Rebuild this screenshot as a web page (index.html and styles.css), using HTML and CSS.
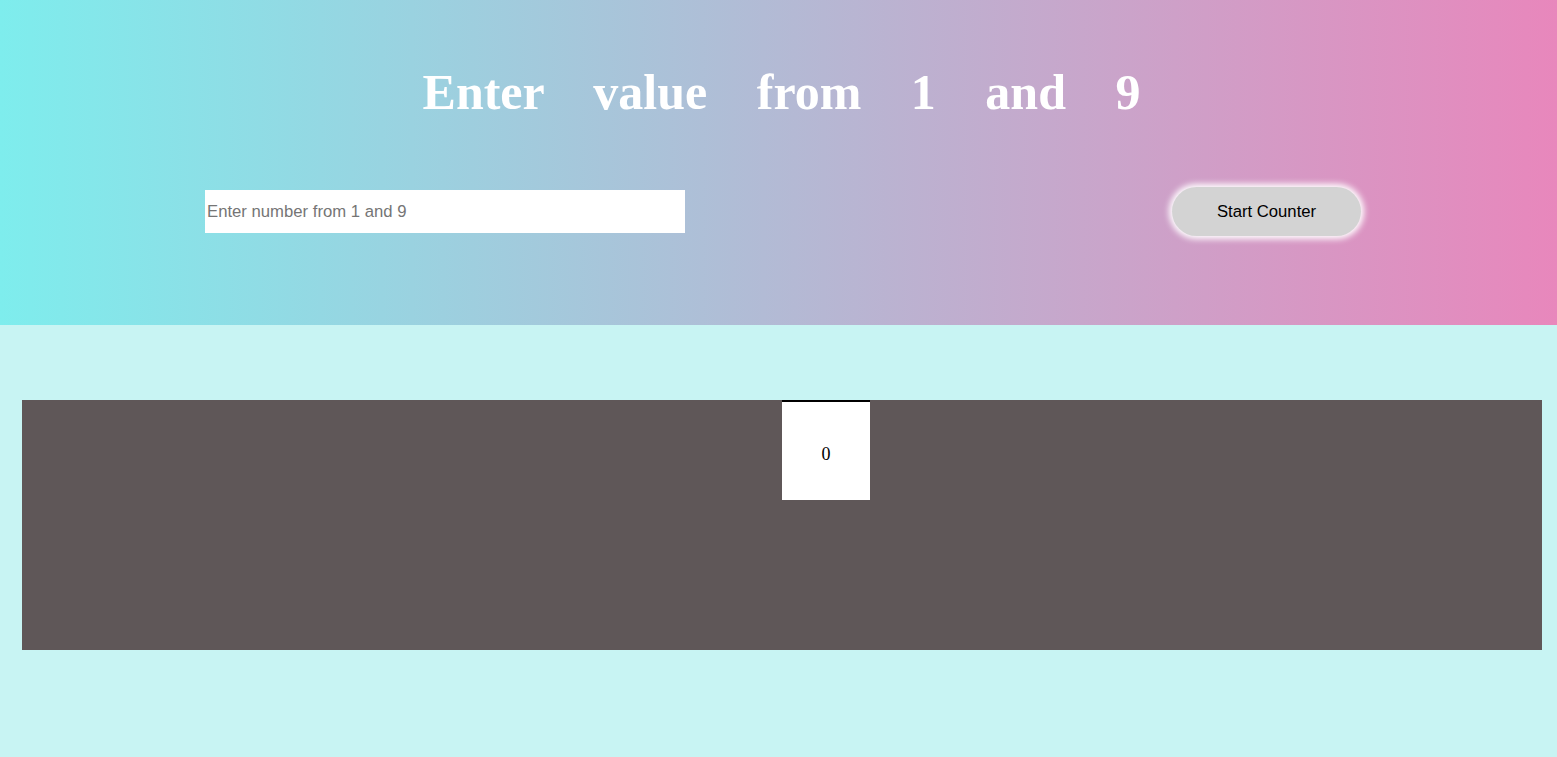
FILE: index.html
```html
<!DOCTYPE html>
<html>
<head>
<meta charset="utf-8">
<link rel="stylesheet" href="styles.css">
</head>
<body>
<header class="hero">
  <h1 class="title">Enter value from 1 and 9</h1>
  <div class="controls">
    <input class="num-input" type="text" placeholder="Enter number from 1 and 9">
    <button class="start-btn">Start Counter</button>
  </div>
</header>
<main class="main">
  <section class="stage">
    <div class="counter">0</div>
  </section>
</main>
</body>
</html>
```

FILE: styles.css
```css
html, body {
  margin: 0;
  padding: 0;
}
body {
  background: #c8f4f3;
  font-family: "Liberation Serif", "Times New Roman", serif;
  height: 757px;
  overflow: hidden;
}
.hero {
  height: 325px;
  background: linear-gradient(to right, #7eeded, #e887bc);
  display: flex;
  flex-direction: column;
  box-sizing: border-box;
  padding-top: 60px;
}
.title {
  margin: 0 0 0 6px;
  font-family: "Liberation Serif", "Times New Roman", serif;
  font-weight: bold;
  font-size: 50px;
  line-height: 64px;
  color: #ffffff;
  text-align: center;
  word-spacing: 37px;
}
.controls {
  display: flex;
  align-items: center;
  justify-content: space-between;
  margin-top: 63px;
  padding: 0 196px 0 205px;
}
.num-input {
  width: 480px;
  height: 43px;
  box-sizing: border-box;
  border: none;
  outline: none;
  padding: 0 2px;
  font-family: "Liberation Sans", Arial, sans-serif;
  font-size: 16.7px;
  background: #ffffff;
  color: #000;
}
.num-input::placeholder {
  color: #757575;
}
.start-btn {
  width: 189px;
  height: 49px;
  border: none;
  border-radius: 25px;
  background: #d3d3d3;
  font-family: "Liberation Sans", Arial, sans-serif;
  font-size: 16.7px;
  color: #000;
  box-shadow: 0 0 6px 3px #ffffff;
}
.main {
  padding-top: 75px;
}
.stage {
  margin-left: 22px;
  width: 1520px;
  height: 250px;
  background: #5f5758;
  display: flex;
  align-items: flex-start;
}
.counter {
  margin-left: 760px;
  width: 88px;
  height: 92px;
  padding-top: 6px;
  background: #ffffff;
  border-top: 2px solid #000;
  display: flex;
  align-items: center;
  justify-content: center;
  font-size: 18px;
  line-height: 18px;
  color: #000;
}
```
